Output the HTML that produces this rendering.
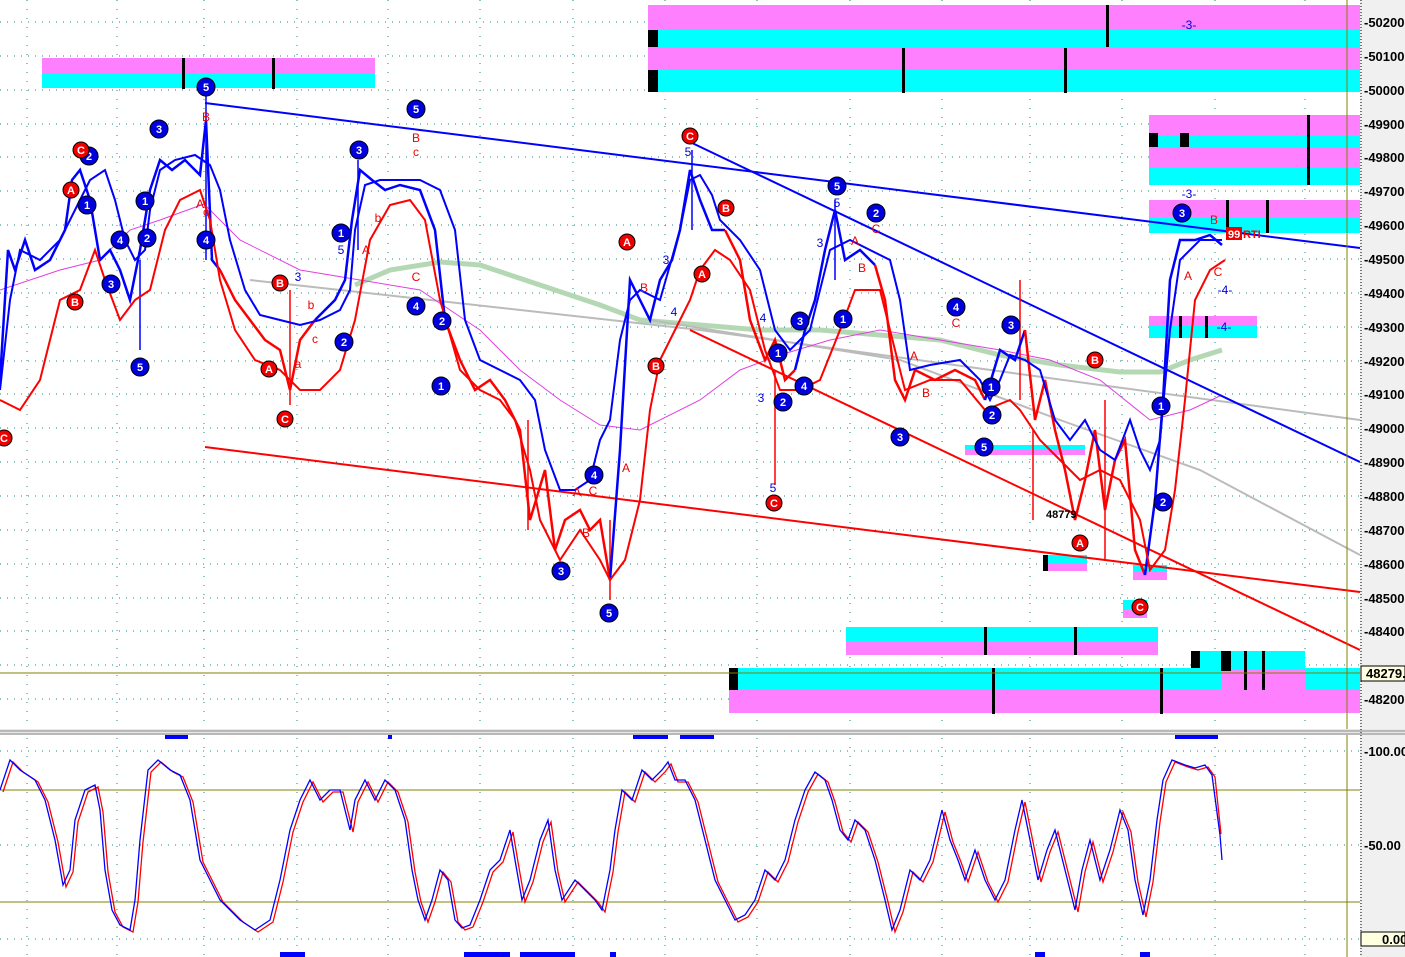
<!DOCTYPE html>
<html><head><meta charset="utf-8"><style>
html,body{margin:0;padding:0;background:#fff;}
svg{display:block;font-family:"Liberation Sans",sans-serif;}
.ax{font-size:13px;font-weight:bold;fill:#000;}
.bn{font-size:11px;font-weight:bold;fill:#fff;text-anchor:middle;}
.lb{font-size:12px;text-anchor:middle;}
</style></head><body>
<svg width="1405" height="957" viewBox="0 0 1405 957" xmlns="http://www.w3.org/2000/svg">
<rect width="1405" height="957" fill="#fff"/>
<g stroke="#1a8a8a" stroke-width="1" stroke-dasharray="1,6">
<line x1="0" y1="22" x2="1360" y2="22"/><line x1="0" y1="56" x2="1360" y2="56"/><line x1="0" y1="90" x2="1360" y2="90"/><line x1="0" y1="124" x2="1360" y2="124"/><line x1="0" y1="157" x2="1360" y2="157"/><line x1="0" y1="191" x2="1360" y2="191"/><line x1="0" y1="225" x2="1360" y2="225"/><line x1="0" y1="259" x2="1360" y2="259"/><line x1="0" y1="293" x2="1360" y2="293"/><line x1="0" y1="327" x2="1360" y2="327"/><line x1="0" y1="361" x2="1360" y2="361"/><line x1="0" y1="394" x2="1360" y2="394"/><line x1="0" y1="428" x2="1360" y2="428"/><line x1="0" y1="462" x2="1360" y2="462"/><line x1="0" y1="496" x2="1360" y2="496"/><line x1="0" y1="530" x2="1360" y2="530"/><line x1="0" y1="564" x2="1360" y2="564"/><line x1="0" y1="598" x2="1360" y2="598"/><line x1="0" y1="631" x2="1360" y2="631"/><line x1="0" y1="665" x2="1360" y2="665"/><line x1="0" y1="699" x2="1360" y2="699"/>
<line x1="0" y1="751" x2="1360" y2="751"/><line x1="0" y1="845" x2="1360" y2="845"/><line x1="0" y1="939" x2="1360" y2="939"/>
</g>
<g stroke="#1a8a8a" stroke-width="1" stroke-dasharray="1,8">
<line x1="27" y1="0" x2="27" y2="957"/><line x1="117" y1="0" x2="117" y2="957"/><line x1="204" y1="0" x2="204" y2="957"/><line x1="297" y1="0" x2="297" y2="957"/><line x1="388" y1="0" x2="388" y2="957"/><line x1="480" y1="0" x2="480" y2="957"/><line x1="573" y1="0" x2="573" y2="957"/><line x1="665" y1="0" x2="665" y2="957"/><line x1="757" y1="0" x2="757" y2="957"/><line x1="850" y1="0" x2="850" y2="957"/><line x1="942" y1="0" x2="942" y2="957"/><line x1="1030" y1="0" x2="1030" y2="957"/><line x1="1122" y1="0" x2="1122" y2="957"/><line x1="1215" y1="0" x2="1215" y2="957"/><line x1="1305" y1="0" x2="1305" y2="957"/>
</g>
<g>
<rect x="42" y="58" width="333" height="15" fill="#ff80ff"/><rect x="42" y="73" width="333" height="15" fill="#00ffff"/>
<rect x="182" y="58" width="3" height="31" fill="#000"/><rect x="272" y="58" width="3" height="31" fill="#000"/>
<rect x="648" y="5" width="712" height="25" fill="#ff80ff"/><rect x="648" y="30" width="712" height="18" fill="#00ffff"/>
<rect x="648" y="48" width="712" height="22" fill="#ff80ff"/><rect x="648" y="70" width="712" height="22" fill="#00ffff"/>
<rect x="648" y="30" width="10" height="17" fill="#000"/><rect x="648" y="70" width="10" height="22" fill="#000"/>
<rect x="1106" y="5" width="3" height="42" fill="#000"/><rect x="902" y="48" width="3" height="45" fill="#000"/><rect x="1064" y="48" width="3" height="45" fill="#000"/>
<rect x="1149" y="115" width="211" height="20" fill="#ff80ff"/><rect x="1149" y="135" width="211" height="13" fill="#00ffff"/>
<rect x="1149" y="148" width="211" height="19" fill="#ff80ff"/><rect x="1149" y="167" width="211" height="18" fill="#00ffff"/>
<rect x="1149" y="133" width="9" height="14" fill="#000"/><rect x="1180" y="133" width="9" height="14" fill="#000"/><rect x="1307" y="115" width="3" height="70" fill="#000"/>
<rect x="1149" y="200" width="211" height="18" fill="#ff80ff"/><rect x="1149" y="218" width="211" height="15" fill="#00ffff"/>
<rect x="1226" y="200" width="3" height="33" fill="#000"/><rect x="1266" y="200" width="3" height="33" fill="#000"/>
<rect x="1149" y="316" width="108" height="10" fill="#ff80ff"/><rect x="1149" y="326" width="108" height="12" fill="#00ffff"/>
<rect x="1179" y="316" width="3" height="22" fill="#000"/><rect x="1205" y="316" width="3" height="22" fill="#000"/>
<rect x="965" y="445" width="120" height="5" fill="#00ffff"/><rect x="965" y="450" width="120" height="5" fill="#ff80ff"/>
<rect x="1043" y="555" width="44" height="8" fill="#00ffff"/><rect x="1043" y="563" width="44" height="8" fill="#ff80ff"/><rect x="1043" y="555" width="5" height="16" fill="#000"/>
<rect x="1133" y="565" width="34" height="7" fill="#00ffff"/><rect x="1133" y="572" width="34" height="8" fill="#ff80ff"/>
<rect x="1123" y="600" width="24" height="9" fill="#00ffff"/><rect x="1123" y="609" width="24" height="9" fill="#ff80ff"/>
<rect x="846" y="627" width="312" height="14" fill="#00ffff"/><rect x="846" y="641" width="312" height="14" fill="#ff80ff"/>
<rect x="984" y="627" width="3" height="28" fill="#000"/><rect x="1074" y="627" width="3" height="28" fill="#000"/>
<rect x="1191" y="651" width="114" height="19" fill="#00ffff"/>
<rect x="729" y="668" width="631" height="22" fill="#00ffff"/><rect x="1221" y="670" width="84" height="20" fill="#ff80ff"/>
<rect x="729" y="690" width="631" height="23" fill="#ff80ff"/>
<rect x="729" y="668" width="9" height="22" fill="#000"/><rect x="1191" y="651" width="9" height="17" fill="#000"/><rect x="1221" y="651" width="10" height="20" fill="#000"/>
<rect x="992" y="668" width="3" height="46" fill="#000"/><rect x="1160" y="668" width="3" height="46" fill="#000"/>
<rect x="1244" y="651" width="3" height="39" fill="#000"/><rect x="1262" y="651" width="3" height="39" fill="#000"/>
</g>
<line x1="0" y1="673" x2="1360" y2="673" stroke="#808000" stroke-width="1"/>
<polyline fill="none" stroke="#b4d8b4" stroke-width="5" points="355,285 390,270 440,262 480,265 540,285 600,305 640,320 700,325 760,330 820,330 880,335 940,340 1000,355 1060,365 1120,372 1160,372 1190,360 1222,350"/>
<polyline fill="none" stroke="#bbbbbb" stroke-width="2" points="250,280 700,330 1100,385 1360,420"/>
<polyline fill="none" stroke="#bbbbbb" stroke-width="2" points="650,320 900,360 1060,420 1200,470 1360,555"/>
<polyline fill="none" stroke="#e040e0" stroke-width="1" points="0,290 60,270 100,260 130,230 160,220 204,204 240,240 300,270 360,280 420,290 480,330 520,370 560,400 600,425 640,430 700,400 740,370 780,355 830,340 880,330 940,340 1000,350 1050,360 1100,380 1150,420 1190,410 1222,395"/>
<line x1="205" y1="103" x2="1360" y2="248" stroke="#0000ff" stroke-width="2"/>
<line x1="690" y1="142" x2="1360" y2="462" stroke="#0000ff" stroke-width="2"/>
<line x1="205" y1="447" x2="1360" y2="592" stroke="#ff0000" stroke-width="2"/>
<line x1="690" y1="330" x2="1360" y2="650" stroke="#ff0000" stroke-width="2"/>
<g stroke-width="1.5">
<line x1="206" y1="95" x2="206" y2="260" stroke="#0000ff"/><line x1="775" y1="370" x2="775" y2="485" stroke="#ff0000"/><line x1="1020" y1="280" x2="1020" y2="400" stroke="#ff0000"/><line x1="1033" y1="430" x2="1033" y2="520" stroke="#ff0000"/><line x1="140" y1="260" x2="140" y2="350" stroke="#0000ff"/><line x1="290" y1="290" x2="290" y2="405" stroke="#ff0000"/><line x1="610" y1="520" x2="610" y2="600" stroke="#ff0000"/><line x1="692" y1="150" x2="692" y2="230" stroke="#0000ff"/><line x1="835" y1="200" x2="835" y2="280" stroke="#0000ff"/><line x1="1105" y1="400" x2="1105" y2="560" stroke="#ff0000"/><line x1="528" y1="420" x2="528" y2="530" stroke="#ff0000"/><line x1="358" y1="160" x2="358" y2="250" stroke="#0000ff"/>
</g>
<g stroke-width="2.5" fill="none">
<polyline stroke="#0000ff" points="0,380 8,250 15,270 25,240 35,270 50,260 65,230 72,180 80,170 90,200 100,260 110,250 120,270 130,300 140,250 150,190 160,160 172,170 185,160 200,175 206,120 212,260 220,270"/>
<polyline stroke="#ff0000" points="220,270 235,300 250,320 265,340 280,350 290,390 300,340 315,320"/>
<polyline stroke="#0000ff" points="315,320 335,300 345,280 352,220 360,170 372,180 385,190 400,185 420,190 435,230 445,320"/>
<polyline stroke="#ff0000" points="445,320 460,360 475,390 490,380 505,400 520,430 530,520 545,470 555,550 565,520 580,510 590,530 600,520 610,580"/>
<polyline stroke="#0000ff" points="610,580 620,450 630,280 640,300 650,320 660,280 672,260 680,230 690,170 700,200 712,230 725,230"/>
<polyline stroke="#ff0000" points="725,230 740,260 750,320 765,360 775,340 785,380 795,370"/>
<polyline stroke="#0000ff" points="795,370 805,330 815,300 825,250 835,210 845,260 860,250 875,265"/>
<polyline stroke="#ff0000" points="875,265 885,300 895,380 905,400 915,370 935,380 955,370 975,380 985,400"/>
<polyline stroke="#0000ff" points="985,400 1000,350 1015,360 1025,330"/>
<polyline stroke="#ff0000" points="1025,330 1035,420 1045,380 1055,430 1065,470 1075,520 1085,480 1095,430 1105,510 1115,460 1125,440 1135,550 1145,575"/>
<polyline stroke="#0000ff" points="1145,575 1155,500 1163,400 1170,280 1180,240 1195,240 1210,235 1222,245"/>
</g>
<polyline fill="none" stroke="#0000ff" stroke-width="2" points="0,390 10,300 20,250 40,260 60,240 80,200 90,180 105,170 115,200 125,240 135,260 145,250 150,210 160,170 175,160 195,155 210,165 220,190 230,240 245,290 260,315 280,320 300,325 320,320 340,310 350,290 355,230 365,185 380,180 400,180 420,180 440,190 455,230 465,320 480,360 500,370 520,380 535,400 545,450 560,490 575,490 590,480 600,440 610,420 620,340 630,300 640,290 660,300 680,230 690,180 700,175 712,195 720,220 740,240 760,270 775,330 790,350 800,340 810,330 820,290 830,250 850,240 870,250 890,260 900,300 910,370 930,365 960,360 980,380 990,400 1000,380 1010,355 1025,360 1040,370 1055,420 1070,440 1085,420 1100,450 1115,460 1130,420 1140,450 1150,470 1160,440 1170,330 1180,260 1200,240 1222,240"/>
<polyline fill="none" stroke="#ff0000" stroke-width="2" points="0,400 20,410 40,380 60,300 80,290 95,250 105,280 120,320 135,300 150,290 165,230 180,200 200,190 210,220 220,280 235,330 255,360 280,370 300,390 320,390 340,370 355,320 370,240 390,205 410,200 425,220 440,300 460,370 480,390 500,400 515,420 530,470 540,520 560,560 580,530 600,560 610,580 625,560 640,500 650,410 660,360 675,330 690,300 700,270 715,250 730,260 750,290 765,350 780,390 800,390 820,380 840,330 855,290 880,290 890,330 905,390 930,380 960,380 985,410 1010,400 1020,410 1040,440 1060,460 1080,480 1100,470 1120,480 1140,520 1150,570 1165,550 1175,490 1185,400 1195,300 1210,270 1225,260"/>
<g fill="#0000dd" stroke="#000" stroke-width="1">
<circle cx="206" cy="87" r="9"/><circle cx="416" cy="109" r="9"/><circle cx="159" cy="129" r="9"/><circle cx="89" cy="156" r="9"/><circle cx="359" cy="150" r="9"/><circle cx="87" cy="205" r="9"/><circle cx="145" cy="201" r="9"/><circle cx="147" cy="238" r="9"/><circle cx="120" cy="240" r="9"/><circle cx="111" cy="284" r="9"/><circle cx="140" cy="367" r="9"/><circle cx="206" cy="240" r="9"/><circle cx="341" cy="233" r="9"/><circle cx="344" cy="342" r="9"/><circle cx="416" cy="306" r="9"/><circle cx="442" cy="321" r="9"/><circle cx="441" cy="386" r="9"/><circle cx="561" cy="571" r="9"/><circle cx="594" cy="475" r="9"/><circle cx="609" cy="613" r="9"/><circle cx="837" cy="186" r="9"/><circle cx="876" cy="213" r="9"/><circle cx="778" cy="353" r="9"/><circle cx="800" cy="321" r="9"/><circle cx="843" cy="319" r="9"/><circle cx="804" cy="386" r="9"/><circle cx="783" cy="402" r="9"/><circle cx="956" cy="307" r="9"/><circle cx="1011" cy="325" r="9"/><circle cx="900" cy="437" r="9"/><circle cx="991" cy="387" r="9"/><circle cx="992" cy="415" r="9"/><circle cx="984" cy="447" r="9"/><circle cx="1161" cy="406" r="9"/><circle cx="1163" cy="502" r="9"/><circle cx="1182" cy="213" r="9"/>
</g>
<g class="bn">
<text x="206" y="91">5</text><text x="416" y="113">5</text><text x="159" y="133">3</text><text x="89" y="160">2</text><text x="359" y="154">3</text><text x="87" y="209">1</text><text x="145" y="205">1</text><text x="147" y="242">2</text><text x="120" y="244">4</text><text x="111" y="288">3</text><text x="140" y="371">5</text><text x="206" y="244">4</text><text x="341" y="237">1</text><text x="344" y="346">2</text><text x="416" y="310">4</text><text x="442" y="325">2</text><text x="441" y="390">1</text><text x="561" y="575">3</text><text x="594" y="479">4</text><text x="609" y="617">5</text><text x="837" y="190">5</text><text x="876" y="217">2</text><text x="778" y="357">1</text><text x="800" y="325">3</text><text x="843" y="323">1</text><text x="804" y="390">4</text><text x="783" y="406">2</text><text x="956" y="311">4</text><text x="1011" y="329">3</text><text x="900" y="441">3</text><text x="991" y="391">1</text><text x="992" y="419">2</text><text x="984" y="451">5</text><text x="1161" y="410">1</text><text x="1163" y="506">2</text><text x="1182" y="217">3</text>
</g>
<g fill="#ee0000" stroke="#000" stroke-width="1">
<circle cx="81" cy="150" r="8"/><circle cx="71" cy="190" r="8"/><circle cx="75" cy="302" r="8"/><circle cx="280" cy="283" r="8"/><circle cx="269" cy="369" r="8"/><circle cx="285" cy="419" r="8"/><circle cx="4" cy="438" r="8"/><circle cx="627" cy="242" r="8"/><circle cx="690" cy="136" r="8"/><circle cx="726" cy="208" r="8"/><circle cx="702" cy="274" r="8"/><circle cx="656" cy="366" r="8"/><circle cx="774" cy="503" r="8"/><circle cx="1095" cy="360" r="8"/><circle cx="1080" cy="543" r="8"/><circle cx="1140" cy="607" r="8"/>
</g>
<g class="bn">
<text x="81" y="154">C</text><text x="71" y="194">A</text><text x="75" y="306">B</text><text x="280" y="287">B</text><text x="269" y="373">A</text><text x="285" y="423">C</text><text x="4" y="442">C</text><text x="627" y="246">A</text><text x="690" y="140">C</text><text x="726" y="212">B</text><text x="702" y="278">A</text><text x="656" y="370">B</text><text x="774" y="507">C</text><text x="1095" y="364">B</text><text x="1080" y="547">A</text><text x="1140" y="611">C</text>
</g>
<g class="lb" fill="#ee0000">
<text x="206" y="121">B</text><text x="200" y="208">A</text><text x="206" y="216">c</text><text x="416" y="142">B</text><text x="416" y="156">c</text><text x="416" y="281">C</text><text x="366" y="254">A</text><text x="378" y="222">b</text><text x="311" y="309">b</text><text x="315" y="343">c</text><text x="298" y="368">a</text><text x="577" y="496">A</text><text x="593" y="495">C</text><text x="586" y="537">B</text><text x="626" y="472">A</text><text x="644" y="292">B</text><text x="855" y="245">A</text><text x="876" y="233">C</text><text x="862" y="272">B</text><text x="956" y="327">C</text><text x="914" y="360">A</text><text x="926" y="397">B</text><text x="1214" y="224">B</text><text x="1188" y="280">A</text><text x="1218" y="276">C</text>
</g>
<g class="lb" fill="#0000dd">
<text x="298" y="281">3</text><text x="341" y="254">5</text><text x="688" y="156">5</text><text x="773" y="492">5</text><text x="837" y="207">5</text><text x="820" y="247">3</text><text x="761" y="402">3</text><text x="763" y="322">4</text><text x="666" y="264">3</text><text x="674" y="316">4</text><text x="1189" y="198">-3-</text><text x="1189" y="29">-3-</text><text x="1225" y="294">-4-</text><text x="1224" y="331">-4-</text>
</g>
<text x="1046" y="518" font-size="11" font-weight="bold" fill="#000">48779</text>
<rect x="1226" y="227" width="16" height="13" fill="#ee0000"/><text x="1228" y="238" font-size="11" font-weight="bold" fill="#fff">99</text><text x="1243" y="238" font-size="11" font-weight="bold" fill="#ee0000">RTI</text>
<line x1="1347" y1="0" x2="1347" y2="957" stroke="#808000" stroke-width="1"/>
<rect x="0" y="729" width="1405" height="6" fill="#e8e8e8"/>
<line x1="0" y1="731" x2="1405" y2="731" stroke="#888"/><line x1="0" y1="734" x2="1405" y2="734" stroke="#888"/>
<line x1="0" y1="790" x2="1360" y2="790" stroke="#808000"/><line x1="0" y1="902" x2="1360" y2="902" stroke="#808000"/>
<g fill="#0000ff">
<rect x="165" y="735" width="23" height="4"/><rect x="388" y="735" width="4" height="4"/><rect x="633" y="735" width="35" height="4"/><rect x="680" y="735" width="34" height="4"/><rect x="1175" y="735" width="43" height="4"/>
<rect x="280" y="952" width="25" height="5"/><rect x="464" y="952" width="46" height="5"/><rect x="520" y="952" width="55" height="5"/><rect x="610" y="952" width="6" height="5"/><rect x="1035" y="952" width="10" height="5"/><rect x="1140" y="952" width="10" height="5"/>
</g>
<polyline fill="none" stroke="#ff0000" stroke-width="1.3" transform="translate(3,2)" points="0,790 10,760 20,770 35,780 45,800 55,840 63,885 70,870 75,820 85,790 95,785 100,810 105,870 112,910 120,925 130,930 135,900 140,840 148,770 158,760 170,770 180,775 190,800 200,860 210,880 220,900 240,920 255,930 270,920 280,880 290,830 300,800 310,780 320,800 330,790 340,790 350,830 355,800 365,780 375,800 385,780 395,790 405,820 412,870 418,900 425,920 432,900 440,870 448,880 455,920 462,928 470,925 480,900 490,870 500,860 510,830 515,860 522,900 530,880 540,840 548,820 555,870 562,900 575,880 585,890 595,900 602,910 610,870 615,830 622,790 632,800 642,770 652,780 662,770 668,762 675,780 685,780 695,800 705,840 715,880 725,900 735,920 745,915 755,900 765,870 775,880 785,860 795,820 805,790 815,772 825,780 832,800 840,830 848,840 855,820 865,830 875,860 885,900 892,930 900,910 910,870 920,880 930,860 942,810 950,840 958,860 965,880 975,850 985,880 995,900 1005,880 1015,830 1022,800 1030,840 1038,880 1047,850 1055,830 1065,870 1075,910 1082,870 1090,840 1100,880 1110,850 1120,810 1128,830 1135,880 1143,915 1150,880 1157,820 1163,780 1172,760 1185,765 1195,768 1205,765 1212,775 1218,832"/>
<polyline fill="none" stroke="#0000ff" stroke-width="1.3" points="0,790 10,760 20,770 35,780 45,800 55,840 63,885 70,870 75,820 85,790 95,785 100,810 105,870 112,910 120,925 130,930 135,900 140,840 148,770 158,760 170,770 180,775 190,800 200,860 210,880 220,900 240,920 255,930 270,920 280,880 290,830 300,800 310,780 320,800 330,790 340,790 350,830 355,800 365,780 375,800 385,780 395,790 405,820 412,870 418,900 425,920 432,900 440,870 448,880 455,920 462,928 470,925 480,900 490,870 500,860 510,830 515,860 522,900 530,880 540,840 548,820 555,870 562,900 575,880 585,890 595,900 602,910 610,870 615,830 622,790 632,800 642,770 652,780 662,770 668,762 675,780 685,780 695,800 705,840 715,880 725,900 735,920 745,915 755,900 765,870 775,880 785,860 795,820 805,790 815,772 825,780 832,800 840,830 848,840 855,820 865,830 875,860 885,900 892,930 900,910 910,870 920,880 930,860 942,810 950,840 958,860 965,880 975,850 985,880 995,900 1005,880 1015,830 1022,800 1030,840 1038,880 1047,850 1055,830 1065,870 1075,910 1082,870 1090,840 1100,880 1110,850 1120,810 1128,830 1135,880 1143,915 1150,880 1157,820 1163,780 1172,760 1185,765 1195,768 1205,765 1212,775 1220,835 1222,860"/>
<rect x="1360" y="0" width="45" height="729" fill="#f0f0f0"/><rect x="1360" y="735" width="45" height="222" fill="#f0f0f0"/>
<line x1="1361" y1="0" x2="1361" y2="957" stroke="#000" stroke-dasharray="1,2"/>
<g class="ax">
<text x="1364" y="27">-50200</text><text x="1364" y="61">-50100</text><text x="1364" y="95">-50000</text><text x="1364" y="129">-49900</text><text x="1364" y="162">-49800</text><text x="1364" y="196">-49700</text><text x="1364" y="230">-49600</text><text x="1364" y="264">-49500</text><text x="1364" y="298">-49400</text><text x="1364" y="332">-49300</text><text x="1364" y="366">-49200</text><text x="1364" y="399">-49100</text><text x="1364" y="433">-49000</text><text x="1364" y="467">-48900</text><text x="1364" y="501">-48800</text><text x="1364" y="535">-48700</text><text x="1364" y="569">-48600</text><text x="1364" y="603">-48500</text><text x="1364" y="636">-48400</text><text x="1364" y="704">-48200</text>
<text x="1364" y="756">-100.00</text><text x="1364" y="850">-50.00</text>
</g>
<rect x="1361" y="666" width="44" height="15" fill="#ffffe0" stroke="#000"/><text x="1366" y="678" class="ax">48279.</text>
<rect x="1361" y="932" width="44" height="14" fill="#ffffe0" stroke="#000"/><text x="1382" y="944" class="ax">0.00</text>
</svg>
</body></html>
